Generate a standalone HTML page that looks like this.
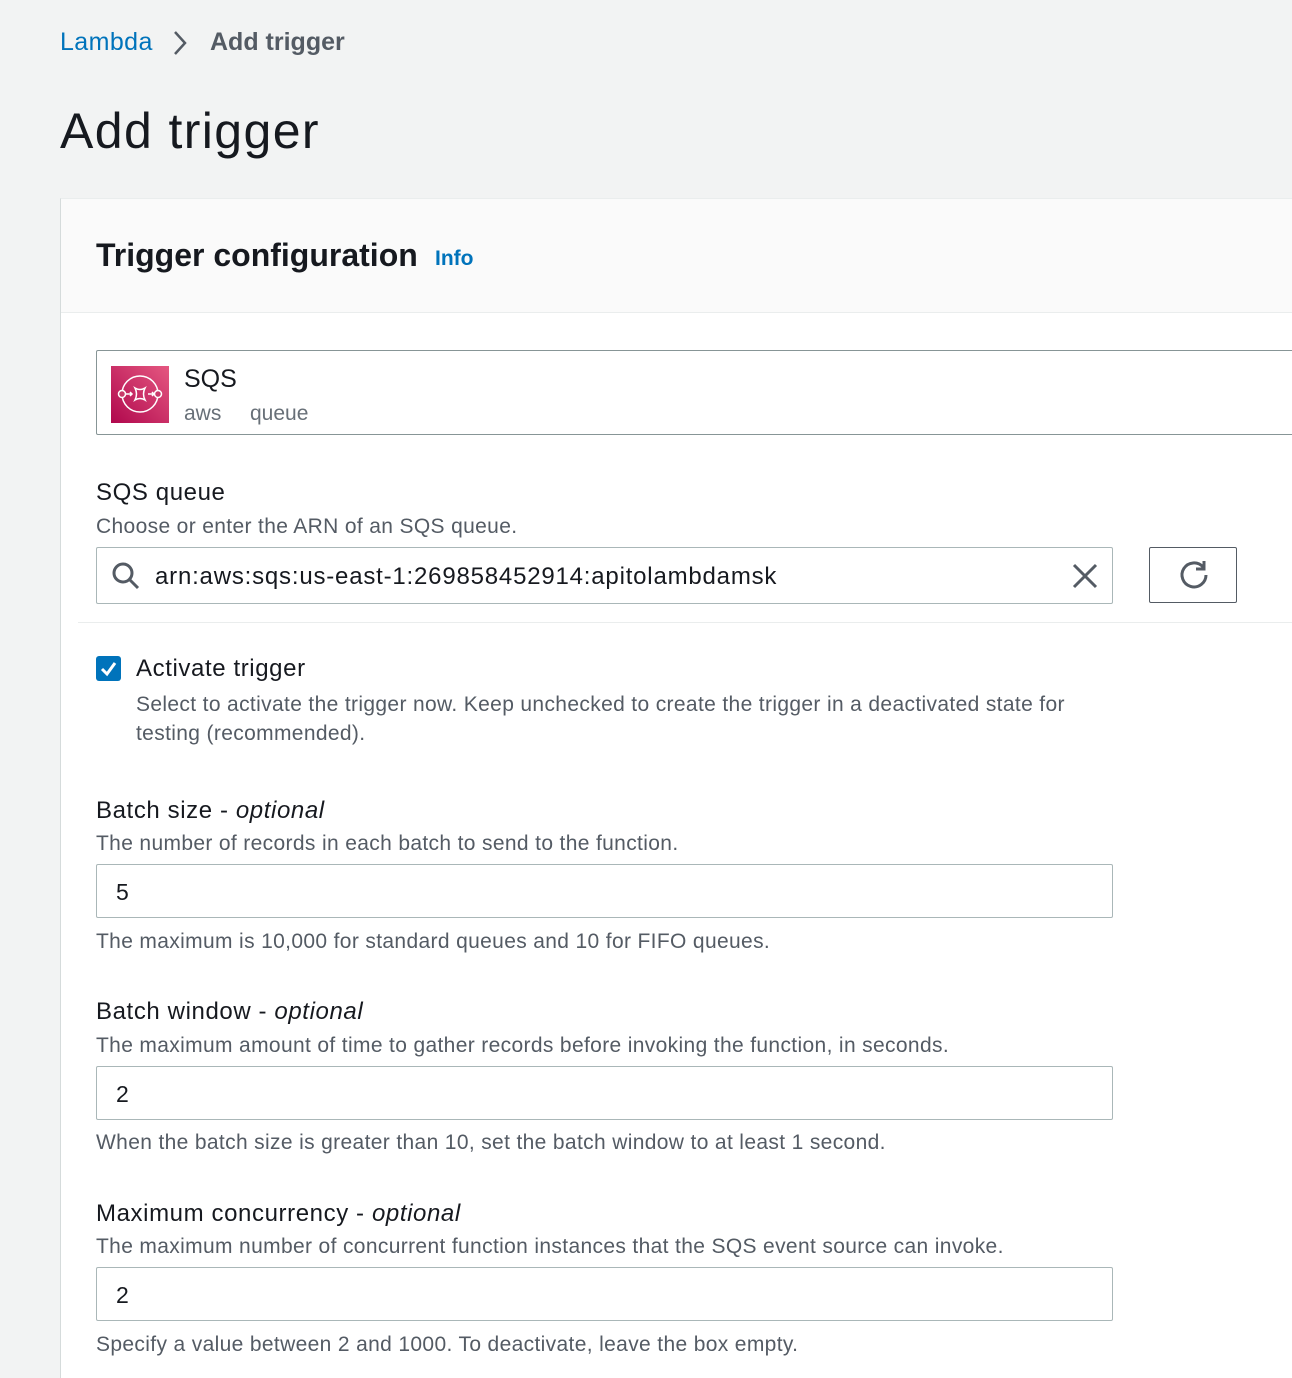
<!DOCTYPE html>
<html><head><style>
*{box-sizing:border-box;margin:0;padding:0}
body{width:1292px;height:1370px;background:#f2f3f3;font-family:"Liberation Sans",sans-serif;color:#16191f;position:relative;overflow:hidden}
.a{position:absolute;white-space:nowrap}
.lbl{font-size:24px;color:#16191f;letter-spacing:0.6px}
.desc{font-size:21px;color:#545b64;letter-spacing:0.35px}
.inp{position:absolute;left:96px;width:1017px;height:54px;border:1px solid #aab7b8;border-radius:2px;background:#fff;font-size:23px;padding:14px 0 0 19px}
</style></head><body>
<div class="a" style="left:60px;top:28px;font-size:25px;color:#0073bb;letter-spacing:0.4px">Lambda</div>
<svg class="a" style="left:170px;top:29px" width="20" height="28"><path d="M5 3 L15 14 L5 25" stroke="#545b64" stroke-width="2.5" fill="none"/></svg>
<div class="a" style="left:210px;top:28px;font-size:25px;color:#545b64;font-weight:bold">Add trigger</div>
<div class="a" style="left:60px;top:102px;font-size:50px;color:#16191f;letter-spacing:1.4px">Add trigger</div>

<div class="a" style="left:60px;top:198px;width:1240px;height:1180px;background:#fff;border-left:1px solid #d5dbdb;border-top:1px solid #eaeded"></div>
<div class="a" style="left:61px;top:199px;width:1240px;height:114px;background:#fafafa;border-bottom:1px solid #eaeded"></div>
<div class="a" style="left:96px;top:237px;font-size:32px;font-weight:bold">Trigger configuration</div>
<div class="a" style="left:435px;top:247px;font-size:21px;font-weight:bold;color:#0073bb">Info</div>

<div class="a" style="left:96px;top:350px;width:1210px;height:85px;border:1px solid #879596;border-radius:2px"></div>
<div class="a" style="left:111px;top:366px;width:58px;height:57px;background:linear-gradient(45deg,#b0084d,#e55881)"></div>
<svg class="a" style="left:111px;top:366px" width="58" height="57" fill="none" stroke="#fff" stroke-width="1.5"><circle cx="29" cy="28" r="18"/><circle cx="11" cy="28" r="3.5" fill="#c93a6a"/><circle cx="47" cy="28" r="3.5" fill="#c93a6a"/><path d="M15 28h6M19 26l2 2-2 2M37 28h6M41 26l2 2-2 2M24 22q5 3 10 0q-3 6 0 12q-5-3-10 0q3-6 0-12z"/></svg>
<div class="a" style="left:184px;top:365px;font-size:25px">SQS</div>
<div class="a" style="left:184px;top:402px;font-size:21px;color:#687078">aws</div>
<div class="a" style="left:250px;top:402px;font-size:21px;color:#687078">queue</div>

<div class="a lbl" style="left:96px;top:479px">SQS queue</div>
<div class="a desc" style="left:96px;top:515px">Choose or enter the ARN of an SQS queue.</div>
<div class="inp" style="top:547px;height:57px;padding-left:58px;padding-top:15px;font-size:24px;letter-spacing:0.8px">arn:aws:sqs:us-east-1:269858452914:apitolambdamsk</div>
<svg class="a" style="left:111px;top:561px" width="30" height="30" fill="none" stroke="#545b64" stroke-width="3"><circle cx="12" cy="12" r="9"/><path d="M19 19l8 8"/></svg>
<svg class="a" style="left:1072px;top:563px" width="26" height="26" stroke="#545b64" stroke-width="3"><path d="M2 2L24 24M24 2L2 24"/></svg>
<div class="a" style="left:1149px;top:547px;width:88px;height:56px;border:1px solid #545b64;border-radius:2px"></div>
<svg class="a" style="left:1177px;top:558px" width="34" height="34" fill="none" stroke="#545b64" stroke-width="3"><path d="M26 9A12 12 0 1 0 29 17"/><path d="M27 3V11H19"/></svg>
<div class="a" style="left:78px;top:622px;width:1220px;height:1px;background:#eaeded"></div>

<div class="a" style="left:96px;top:656px;width:25px;height:25px;background:#0073bb;border-radius:3px"></div>
<svg class="a" style="left:96px;top:656px" width="25" height="25"><path d="M6 13l5 5 8-11" stroke="#fff" stroke-width="3" fill="none"/></svg>
<div class="a lbl" style="left:136px;top:655px">Activate trigger</div>
<div class="a desc" style="left:136px;top:690px;line-height:29px;white-space:normal;width:960px">Select to activate the trigger now. Keep unchecked to create the trigger in a deactivated state for testing (recommended).</div>

<div class="a lbl" style="left:96px;top:797px">Batch size - <i>optional</i></div>
<div class="a desc" style="left:96px;top:832px">The number of records in each batch to send to the function.</div>
<div class="inp" style="top:864px">5</div>
<div class="a desc" style="left:96px;top:930px">The maximum is 10,000 for standard queues and 10 for FIFO queues.</div>

<div class="a lbl" style="left:96px;top:998px">Batch window - <i>optional</i></div>
<div class="a desc" style="left:96px;top:1034px">The maximum amount of time to gather records before invoking the function, in seconds.</div>
<div class="inp" style="top:1066px">2</div>
<div class="a desc" style="left:96px;top:1131px">When the batch size is greater than 10, set the batch window to at least 1 second.</div>

<div class="a lbl" style="left:96px;top:1200px">Maximum concurrency - <i>optional</i></div>
<div class="a desc" style="left:96px;top:1235px">The maximum number of concurrent function instances that the SQS event source can invoke.</div>
<div class="inp" style="top:1267px">2</div>
<div class="a desc" style="left:96px;top:1333px">Specify a value between 2 and 1000. To deactivate, leave the box empty.</div>
</body></html>
